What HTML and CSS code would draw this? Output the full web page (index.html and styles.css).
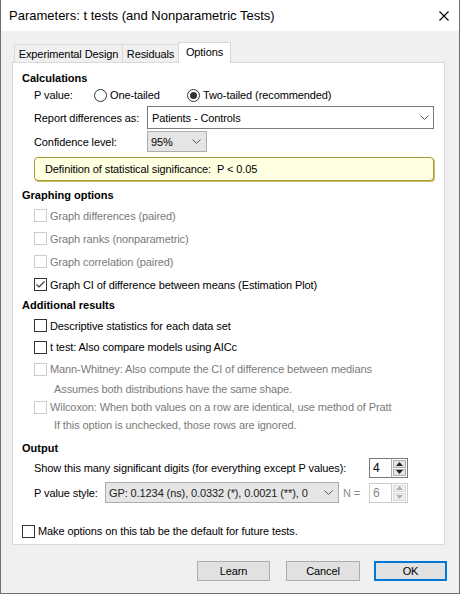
FILE: index.html
```html
<!DOCTYPE html>
<html>
<head>
<meta charset="utf-8">
<link rel="stylesheet" href="styles.css">
</head>
<body>
<div class="window">
  <div class="titlebar">
    <span class="title">Parameters: t tests (and Nonparametric Tests)</span>
    <svg class="close" width="10" height="10" viewBox="0 0 10 10"><path d="M0.5 0.5 L9.5 9.5 M9.5 0.5 L0.5 9.5" stroke="#000" stroke-width="1.1" fill="none"/></svg>
  </div>
  <div class="tabs">
    <div class="tab t1">Experimental Design</div>
    <div class="tab t2">Residuals</div>
    <div class="tab t3 active">Options</div>
  </div>
  <div class="panel">
    <div class="h">Calculations</div>
    <div class="row r-pval">
      <span class="lab w60">P value:</span>
      <span class="radio g1"><span class="rb"></span>One-tailed</span>
      <span class="radio"><span class="rb on"><span class="dot"></span></span>Two-tailed (recommended)</span>
    </div>
    <div class="row r-report">
      <span class="lab w113">Report differences as:</span>
      <div class="select sel-wide"><span class="val">Patients - Controls</span><svg class="chev" width="9" height="5" viewBox="0 0 9 5"><polyline points="0.5,0.5 4.5,4.5 8.5,0.5" fill="none" stroke="#555" stroke-width="1"/></svg></div>
    </div>
    <div class="row r-conf">
      <span class="lab w113">Confidence level:</span>
      <div class="select sel-gray sel-conf"><span class="val">95%</span><svg class="chev" width="9" height="5" viewBox="0 0 9 5"><polyline points="0.5,0.5 4.5,4.5 8.5,0.5" fill="none" stroke="#555" stroke-width="1"/></svg></div>
    </div>
    <div class="sig">Definition of statistical significance:&nbsp; P &lt; 0.05</div>

    <div class="h h-graph">Graphing options</div>
    <div class="row r-cb23 dis"><span class="cb"></span>Graph differences (paired)</div>
    <div class="row r-cb23 dis"><span class="cb"></span>Graph ranks (nonparametric)</div>
    <div class="row r-cb23 dis"><span class="cb"></span>Graph correlation (paired)</div>
    <div class="row r-cb23"><span class="cb"><svg width="11" height="11" viewBox="0 0 11 11"><polyline points="1.5,5.5 4,8 9.5,2.5" fill="none" stroke="#333" stroke-width="1.1"/></svg></span>Graph CI of difference between means (Estimation Plot)</div>

    <div class="h h-add">Additional results</div>
    <div class="row r-desc"><span class="cb"></span>Descriptive statistics for each data set</div>
    <div class="row r-22"><span class="cb"></span>t test: Also compare models using AICc</div>
    <div class="row r-22 dis"><span class="cb"></span>Mann-Whitney: Also compute the CI of difference between medians</div>
    <div class="row r-18 sub dis">Assumes both distributions have the same shape.</div>
    <div class="row r-18 dis"><span class="cb"></span>Wilcoxon: When both values on a row are identical, use method of Pratt</div>
    <div class="row r-18 sub dis">If this option is unchecked, those rows are ignored.</div>

    <div class="h h-out">Output</div>
    <div class="row r-show">
      <span class="lab w335">Show this many significant digits (for everything except P values):</span>
      <div class="spin">
        <span class="spin-val">4</span>
        <span class="spin-btns">
          <span class="sb"><svg width="7" height="4" viewBox="0 0 7 4"><polygon points="3.5,0 7,4 0,4" fill="#222"/></svg></span>
          <span class="sb"><svg width="7" height="4" viewBox="0 0 7 4"><polygon points="0,0 7,0 3.5,4" fill="#222"/></svg></span>
        </span>
      </div>
    </div>
    <div class="row r-pstyle">
      <span class="lab w71">P value style:</span>
      <div class="select sel-gray sel-pstyle"><span class="val">GP: 0.1234 (ns), 0.0332 (*), 0.0021 (**), 0</span><svg class="chev" width="9" height="5" viewBox="0 0 9 5"><polyline points="0.5,0.5 4.5,4.5 8.5,0.5" fill="none" stroke="#555" stroke-width="1"/></svg></div>
      <span class="nlab">N =</span>
      <div class="spin spin-dis">
        <span class="spin-val">6</span>
        <span class="spin-btns">
          <span class="sb"><svg width="7" height="4" viewBox="0 0 7 4"><polygon points="3.5,0 7,4 0,4" fill="#b0b0b0"/></svg></span>
          <span class="sb"><svg width="7" height="4" viewBox="0 0 7 4"><polygon points="0,0 7,0 3.5,4" fill="#b0b0b0"/></svg></span>
        </span>
      </div>
    </div>
    <div class="row r-make"><span class="cb"></span>Make options on this tab be the default for future tests.</div>
  </div>
  <div class="buttons">
    <div class="btn b-learn">Learn</div>
    <div class="btn b-cancel">Cancel</div>
    <div class="btn b-ok">OK</div>
  </div>
</div>
</body>
</html>
```
FILE: styles.css
```css
* { box-sizing: border-box; }
body {
  margin: 0;
  font-family: "Liberation Sans", Arial, sans-serif;
  font-size: 11px;
  letter-spacing: -0.1px;
  color: #000;
  background: #fff;
}
.window {
  width: 460px;
  height: 594px;
  border: 1px solid #6f6f6f;
  border-top: none;
  background: #f0f0f0;
  display: flex;
  flex-direction: column;
}
.titlebar {
  height: 31px;
  flex: none;
  background: #fff;
  display: flex;
  align-items: center;
  justify-content: space-between;
  padding-left: 8px;
  padding-right: 10px;
}
.title { font-size: 13px; letter-spacing: 0; }
.close { display: block; }

.tabs {
  display: flex;
  align-items: flex-end;
  height: 20px;
  margin-top: 11px;
  padding-left: 13px;
  flex: none;
}
.tab {
  height: 18px;
  border: 1px solid #d9d9d9;
  border-bottom: none;
  background: #f0f0f0;
  text-align: center;
  line-height: 18px;
}
.t1 { width: 109px; }
.t2 { width: 57px; margin-left: -1px; }
.t3 { width: 53px; margin-left: -1px; }
.tab.active {
  height: 21px;
  line-height: 18px;
  background: #fff;
  margin-bottom: -1px;
  position: relative;
  z-index: 1;
}

.panel {
  margin-left: 11px;
  width: 433px;
  height: 483px;
  flex: none;
  border: 1px solid #d9d9d9;
  background: #fff;
  padding-top: 7px;
  display: flex;
  flex-direction: column;
}
.h {
  height: 16px;
  line-height: 16px;
  font-weight: bold;
  padding-left: 9px;
  flex: none;
  letter-spacing: 0;
}
.row {
  display: flex;
  align-items: center;
  padding-left: 21px;
  flex: none;
  white-space: nowrap;
}
.lab { flex: none; }
.w60 { width: 60px; }
.w71 { width: 71px; }
.w113 { width: 113px; }
.w335 { width: 335px; }

.r-pval { height: 18px; }
.radio { display: flex; align-items: center; }
.g1 { width: 93px; }
.rb {
  width: 13px; height: 13px;
  border: 1px solid #333;
  border-radius: 50%;
  margin-right: 3px;
  display: flex; align-items: center; justify-content: center;
  flex: none;
  background: #fff;
}
.dot { width: 7px; height: 7px; border-radius: 50%; background: #333; }

.r-report { height: 23px; margin-top: 2px; }
.r-conf { height: 21px; margin-top: 2px; }
.select {
  height: 100%;
  display: flex;
  align-items: center;
  justify-content: space-between;
  overflow: hidden;
}
.sel-wide {
  width: 287px;
  border: 1px solid #7a7a7a;
  background: #fff;
  padding-left: 4px;
  padding-right: 4px;
}
.sel-gray {
  border: 1px solid #adadad;
  background: #e5e5e5;
  padding-left: 3px;
  padding-right: 5px;
}
.sel-conf { width: 60px; }
.sel-pstyle { width: 234px; color: #222; }
.sel-pstyle .val { overflow: hidden; width: 215px; }
.chev { flex: none; display: block; }

.sig {
  margin-top: 5px;
  margin-left: 21px;
  width: 400px;
  height: 24px;
  flex: none;
  background: #ffffe1;
  border: 1px solid #a8983c;
  border-radius: 4px;
  box-shadow: 1px 1px 0 #cbbd6a;
  padding-left: 10px;
  display: flex;
  align-items: center;
}
.h-graph { margin-top: 6px; }
.r-cb23 { height: 23px; }
.h-graph + .r-cb23 { margin-top: 1px; }
.h-add { margin-top: 1px; }
.r-desc { height: 21px; margin-top: 2px; }
.r-22 { height: 22px; }
.r-18 { height: 18px; }
.sub { padding-left: 41px; }
.h-out { margin-top: 6px; }

.cb {
  width: 13px; height: 13px;
  border: 1px solid #333;
  background: #fff;
  margin-right: 3px;
  flex: none;
  display: flex; align-items: center; justify-content: center;
}
.cb svg { display: block; }
.dis { color: #7a7a7a; }
.dis .cb { border-color: #cccccc; }

.r-show { height: 20px; margin-top: 2px; }
.r-pstyle { height: 21px; margin-top: 4px; }
.nlab { color: #8a8a8a; width: 26px; margin-left: 4px; flex: none; }
.spin {
  width: 39px;
  height: 20px;
  display: flex;
  flex: none;
}
.spin-val {
  flex: 1;
  border: 1px solid #7a7a7a;
  border-right: none;
  background: #fff;
  padding-left: 3px;
  display: flex;
  align-items: center;
  font-size: 12px;
}
.spin-btns {
  width: 17px;
  display: flex;
  flex-direction: column;
  border: 1px solid #7a7a7a;
  border-left: 1px solid #adadad;
  background: #fff;
  padding: 1px;
  gap: 1px;
}
.sb {
  flex: 1;
  background: #e5e5e5;
  border: 1px solid #adadad;
  display: flex;
  align-items: center;
  justify-content: center;
}
.sb svg { display: block; }
.spin-dis .spin-val { border-color: #cccccc; color: #8a8a8a; }
.spin-dis .spin-btns { border-color: #cccccc; }
.spin-dis .sb { background: #f0f0f0; border-color: #d8d8d8; }

.r-make { height: 18px; margin-top: 19px; padding-left: 9px; }

.buttons {
  display: flex;
  justify-content: flex-end;
  padding-right: 12px;
  margin-top: 16px;
  flex: none;
}
.btn {
  height: 20px;
  background: #e1e1e1;
  border: 1px solid #adadad;
  display: flex;
  align-items: center;
  justify-content: center;
}
.b-learn { width: 73px; }
.b-cancel { width: 74px; margin-left: 16px; }
.b-ok { width: 73px; margin-left: 14px; border: 2px solid #0078d7; }
```
